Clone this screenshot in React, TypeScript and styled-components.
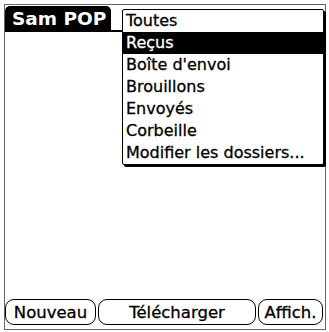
import React from "react";
import styled, { createGlobalStyle } from "styled-components";

const Global = createGlobalStyle`
  html, body { margin: 0; padding: 0; background: #fff; }
  body { font-family: "DejaVu Sans", "Liberation Sans", sans-serif; color: #000; }
`;

const Screen = styled.div`
  position: relative;
  box-sizing: border-box;
  margin: 4px 0 0 4px;
  width: 322px;
  height: 326px;
  border: 1px solid #666;
  display: flex;
  flex-direction: column;
  justify-content: space-between;
  padding: 0 0 4px 0;
`;

const TitleBar = styled.div`
  display: flex;
  align-items: flex-end;
  height: 27px;
`;

const Tab = styled.div`
  background: #000;
  color: #fff;
  height: 26px;
  padding: 0 5px 0 7px;
  border-radius: 5px 5px 0 0;
  font-weight: bold;
  font-size: 18.5px;
  line-height: 25px;
  white-space: nowrap;
`;

const TitleLine = styled.div`
  flex: 1;
  height: 2px;
  background: #000;
`;

const Popup = styled.div`
  position: absolute;
  left: 117px;
  top: 4px;
  width: 202px;
  box-sizing: border-box;
  background: #fff;
  border: 1.5px solid #000;
  border-radius: 2px;
  box-shadow: 2px 2px 0 #000;
  padding: 0;
`;

const Item = styled.div<{ $selected?: boolean }>`
  height: 22px;
  line-height: 21px;
  padding-left: 3px;
  font-size: 16px;
  -webkit-text-stroke: 0.3px currentColor;
  white-space: nowrap;
  background: ${(p) => (p.$selected ? "#000" : "transparent")};
  color: ${(p) => (p.$selected ? "#fff" : "#000")};
`;

const ButtonRow = styled.div`
  display: flex;
  gap: 2px;
  padding: 0 1px 0 0;
`;

const Button = styled.div<{ $w: number }>`
  box-sizing: border-box;
  width: ${(p) => p.$w}px;
  height: 26px;
  border: 1.5px solid #000;
  border-radius: 9px;
  display: flex;
  align-items: center;
  justify-content: center;
  font-size: 16.5px;
  -webkit-text-stroke: 0.3px currentColor;
  white-space: nowrap;
`;

const items = [
  "Toutes",
  "Reçus",
  "Boîte d'envoi",
  "Brouillons",
  "Envoyés",
  "Corbeille",
  "Modifier les dossiers...",
];

export default function App() {
  return (
    <>
      <Global />
      <Screen>
        <TitleBar>
          <Tab>Sam POP</Tab>
          <TitleLine />
        </TitleBar>
        <ButtonRow>
          <Button $w={91}>Nouveau</Button>
          <Button $w={158}>Télécharger</Button>
          <Button $w={65}>Affich.</Button>
        </ButtonRow>
        <Popup>
          {items.map((t) => (
            <Item key={t} $selected={t === "Reçus"}>
              {t}
            </Item>
          ))}
        </Popup>
      </Screen>
    </>
  );
}
